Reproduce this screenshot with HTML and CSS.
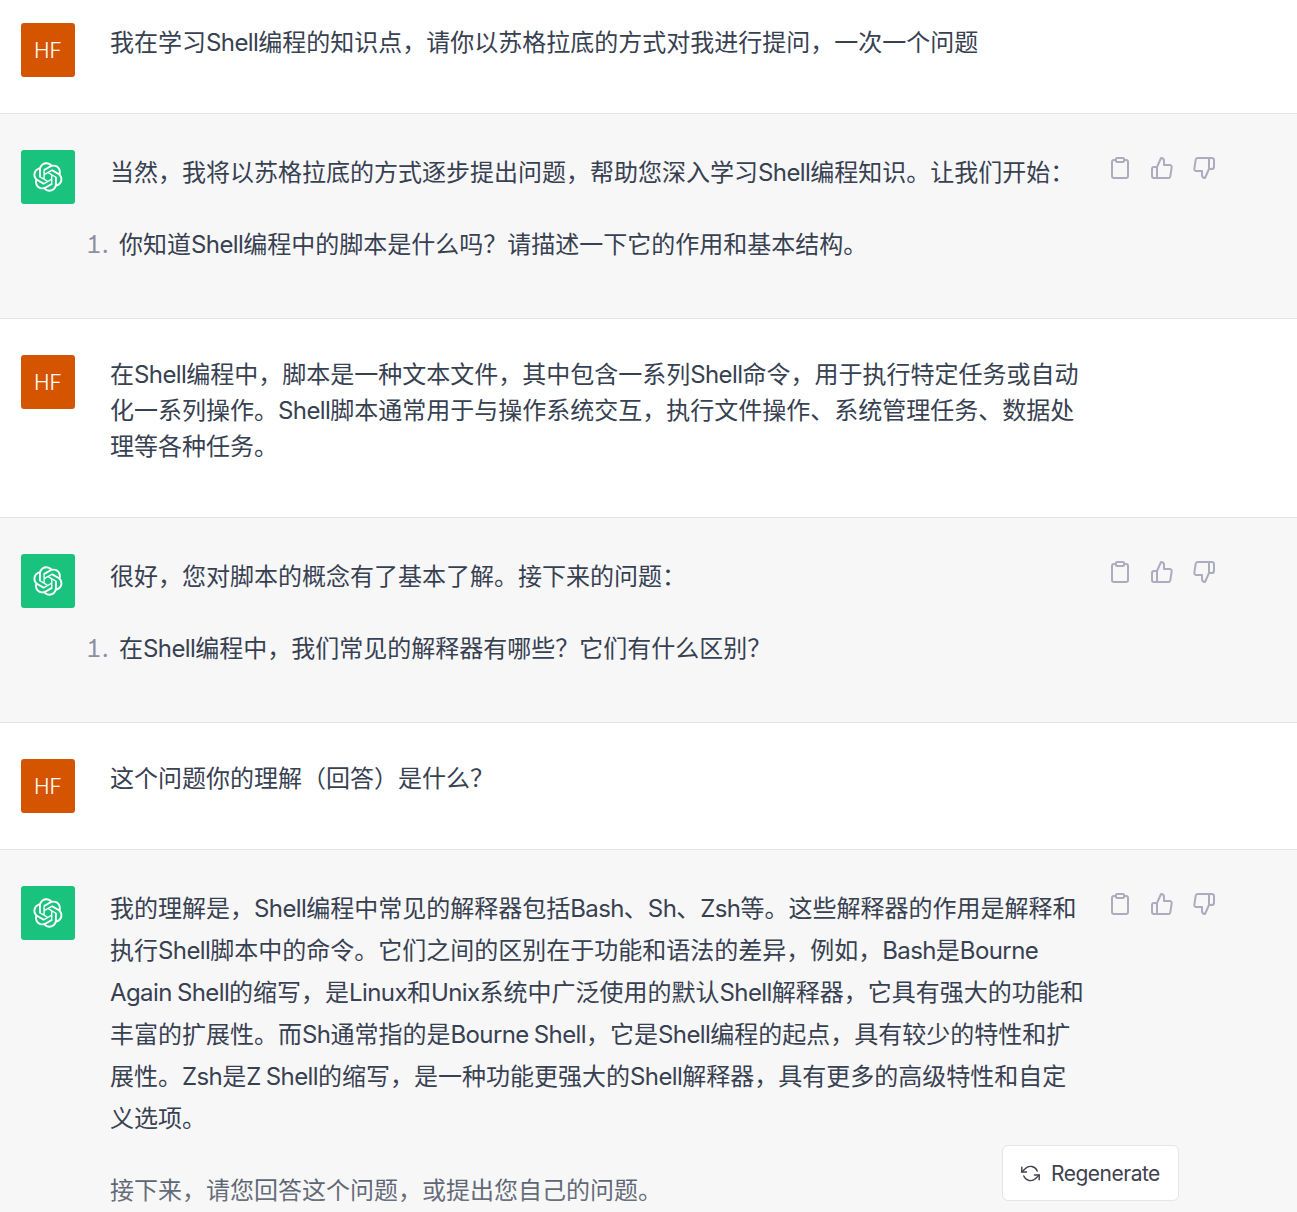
FILE: index.html
```html
<!DOCTYPE html>
<html lang="zh-CN">
<head>
<meta charset="utf-8">
<title>Shell 编程</title>
<link rel="stylesheet" href="styles.css">
</head>
<body>
<svg class="defs" width="0" height="0" aria-hidden="true">
  <defs>
    <symbol id="logo" viewBox="0 0 41 41">
      <path fill="currentColor" d="M37.5324 16.8707C37.9808 15.5241 38.1363 14.0974 37.9886 12.6859C37.8409 11.2744 37.3934 9.91076 36.676 8.68622C35.6126 6.83404 33.9882 5.3676 32.0373 4.4985C30.0864 3.62941 27.9098 3.40259 25.8215 3.85078C24.8796 2.7893 23.7219 1.94125 22.4257 1.36341C21.1295 0.785575 19.7249 0.491269 18.3058 0.500197C16.1708 0.495044 14.0893 1.16803 12.3614 2.42214C10.6335 3.67624 9.34853 5.44666 8.6917 7.47815C7.30085 7.76286 5.98686 8.3414 4.8377 9.17505C3.68854 10.0087 2.73073 11.0782 2.02839 12.312C0.956464 14.1591 0.498905 16.2988 0.721698 18.4228C0.944492 20.5467 1.83612 22.5449 3.268 24.1293C2.81966 25.4759 2.66413 26.9026 2.81182 28.3141C2.95951 29.7256 3.40701 31.0892 4.12437 32.3138C5.18791 34.1659 6.8123 35.6322 8.76321 36.5013C10.7141 37.3704 12.8907 37.5973 14.9789 37.1492C15.9208 38.2107 17.0786 39.0587 18.3747 39.6366C19.6709 40.2144 21.0755 40.5087 22.4946 40.4998C24.6307 40.5054 26.7133 39.8321 28.4418 38.5772C30.1704 37.3223 31.4556 35.5506 32.1119 33.5179C33.5027 33.2332 34.8167 32.6547 35.9659 31.821C37.115 30.9874 38.0728 29.9178 38.7752 28.684C39.8458 26.8371 40.3023 24.6979 40.0789 22.5748C39.8556 20.4517 38.9639 18.4544 37.5324 16.8707ZM22.4978 37.8849C20.7443 37.8874 19.0459 37.2733 17.6994 36.1501C17.7601 36.117 17.8666 36.0586 17.936 36.0161L25.9004 31.4156C26.1003 31.3019 26.2663 31.137 26.3813 30.9378C26.4964 30.7386 26.5563 30.5124 26.5549 30.2825V19.0542L29.9213 20.998C29.9389 21.0068 29.9541 21.0198 29.9656 21.0359C29.977 21.052 29.9842 21.0707 29.9867 21.0902V30.3889C29.9842 32.375 29.1946 34.2791 27.7909 35.6841C26.3872 37.0892 24.4838 37.8806 22.4978 37.8849ZM6.39227 31.0064C5.51397 29.4888 5.19742 27.7107 5.49804 25.9832C5.55718 26.0187 5.66048 26.0818 5.73461 26.1244L13.699 30.7248C13.8975 30.8408 14.1233 30.902 14.3532 30.902C14.583 30.902 14.8088 30.8408 15.0073 30.7248L24.731 25.1103V28.9979C24.7321 29.0177 24.7283 29.0376 24.7199 29.0556C24.7115 29.0736 24.6988 29.0893 24.6829 29.1012L16.6317 33.7497C14.9096 34.7416 12.8643 35.0097 10.9447 34.4954C9.02506 33.9811 7.38785 32.7263 6.39227 31.0064ZM4.29707 13.6194C5.17156 12.0998 6.55279 10.9364 8.19885 10.3327C8.19885 10.4013 8.19491 10.5228 8.19491 10.6071V19.808C8.19351 20.0378 8.25334 20.2638 8.36823 20.4629C8.48312 20.6619 8.64893 20.8267 8.84863 20.9404L18.5723 26.5542L15.206 28.4979C15.1894 28.5089 15.1703 28.5155 15.1505 28.5173C15.1307 28.5191 15.1107 28.516 15.0924 28.5082L7.04046 23.8557C5.32135 22.8601 4.06716 21.2235 3.55289 19.3046C3.03862 17.3858 3.30624 15.3413 4.29707 13.6194ZM31.955 20.0556L22.2312 14.4411L25.5976 12.4981C25.6142 12.4872 25.6333 12.4805 25.6531 12.4787C25.6729 12.4769 25.6928 12.4801 25.7111 12.4879L33.7631 17.1364C34.9967 17.849 36.0017 18.8982 36.6606 20.1613C37.3194 21.4244 37.6047 22.849 37.4832 24.2684C37.3617 25.6878 36.8382 27.0432 35.9743 28.1759C35.1103 29.3086 33.9415 30.1717 32.6047 30.6641C32.6047 30.5947 32.6047 30.4733 32.6047 30.3889V21.188C32.6066 20.9586 32.5474 20.7328 32.4332 20.5338C32.319 20.3348 32.154 20.1698 31.955 20.0556ZM35.3055 15.0128C35.2464 14.9765 35.1431 14.9142 35.069 14.8717L27.1045 10.2712C26.906 10.1554 26.6803 10.0943 26.4504 10.0943C26.2206 10.0943 25.9948 10.1554 25.7963 10.2712L16.0726 15.8858V11.9982C16.0715 11.9783 16.0753 11.9585 16.0837 11.9405C16.0921 11.9225 16.1048 11.9068 16.1207 11.8949L24.1719 7.25025C25.4053 6.53903 26.8158 6.19376 28.2383 6.25482C29.6608 6.31589 31.0364 6.78077 32.2044 7.59508C33.3723 8.40939 34.2842 9.53945 34.8334 10.8531C35.3826 12.1667 35.5464 13.6095 35.3055 15.0128ZM14.2424 21.9419L10.8752 19.9981C10.8576 19.9893 10.8423 19.9763 10.8309 19.9602C10.8195 19.9441 10.8122 19.9254 10.8098 19.9058V10.6071C10.8107 9.18295 11.2173 7.78848 11.9819 6.58696C12.7466 5.38544 13.8377 4.42659 15.1275 3.82264C16.4173 3.21869 17.8524 2.99464 19.2649 3.1767C20.6775 3.35876 22.0089 3.93941 23.1034 4.85067C23.0427 4.88379 22.937 4.94215 22.8668 4.98473L14.9024 9.58517C14.7025 9.69878 14.5366 9.86356 14.4215 10.0626C14.3065 10.2616 14.2466 10.4877 14.2479 10.7175L14.2424 21.9419ZM16.071 17.9991L20.4018 15.4978L24.7325 17.9975V22.9985L20.4018 25.4983L16.071 22.9985V17.9991Z"/>
    </symbol>
    <symbol id="copy" viewBox="0 0 24 24"><path d="M16 4h2a2 2 0 0 1 2 2v14a2 2 0 0 1-2 2H6a2 2 0 0 1-2-2V6a2 2 0 0 1 2-2h2"/><rect x="8" y="2" width="8" height="4" rx="1" ry="1"/></symbol>
    <symbol id="up" viewBox="0 0 24 24"><path d="M14 9V5a3 3 0 0 0-3-3l-4 9v11h11.28a2 2 0 0 0 2-1.7l1.38-9a2 2 0 0 0-2-2.3zM7 22H4a2 2 0 0 1-2-2v-7a2 2 0 0 1 2-2h3"/></symbol>
    <symbol id="down" viewBox="0 0 24 24"><path d="M10 15v4a3 3 0 0 0 3 3l4-9V2H5.72a2 2 0 0 0-2 1.7l-1.38 9a2 2 0 0 0 2 2.3zm7-13h2.67A2.31 2.31 0 0 1 22 4v7a2.31 2.31 0 0 1-2.33 2H17"/></symbol>
  </defs>
</svg>

<main class="thread">
  <section class="row row-first">
    <div class="avatar avatar-user">HF</div>
    <div class="body"><p class="user-text">我在学习<span class="en">Shell</span>编程的知识点，请你以苏格拉底的方式对我进行提问，一次一个问题</p></div>
  </section>

  <section class="row row-bot">
    <div class="avatar avatar-bot"><svg class="logo"><use href="#logo"/></svg></div>
    <div class="body">
      <p class="bot-text">当然，我将以苏格拉底的方式逐步提出问题，帮助您深入学习<span class="en">Shell</span>编程知识。让我们开始：</p>
      <ol class="list"><li>你知道<span class="en">Shell</span>编程中的脚本是什么吗？请描述一下它的作用和基本结构。</li></ol>
    </div>
    <div class="actions">
      <svg class="icon"><use href="#copy"/></svg>
      <svg class="icon"><use href="#up"/></svg>
      <svg class="icon"><use href="#down"/></svg>
    </div>
  </section>

  <section class="row">
    <div class="avatar avatar-user">HF</div>
    <div class="body"><p class="user-text">在<span class="en">Shell</span>编程中，脚本是一种文本文件，其中包含一系列<span class="en">Shell</span>命令，用于执行特定任务或自动化一系列操作。<span class="en">Shell</span>脚本通常用于与操作系统交互，执行文件操作、系统管理任务、数据处理等各种任务。</p></div>
  </section>

  <section class="row row-bot">
    <div class="avatar avatar-bot"><svg class="logo"><use href="#logo"/></svg></div>
    <div class="body">
      <p class="bot-text">很好，您对脚本的概念有了基本了解。接下来的问题：</p>
      <ol class="list"><li>在<span class="en">Shell</span>编程中，我们常见的解释器有哪些？它们有什么区别？</li></ol>
    </div>
    <div class="actions">
      <svg class="icon"><use href="#copy"/></svg>
      <svg class="icon"><use href="#up"/></svg>
      <svg class="icon"><use href="#down"/></svg>
    </div>
  </section>

  <section class="row">
    <div class="avatar avatar-user">HF</div>
    <div class="body"><p class="user-text">这个问题你的理解（回答）是什么？</p></div>
  </section>

  <section class="row row-bot">
    <div class="avatar avatar-bot"><svg class="logo"><use href="#logo"/></svg></div>
    <div class="body">
      <p class="bot-text">我的理解是，<span class="en">Shell</span>编程中常见的解释器包括<span class="en">Bash</span>、<span class="en">Sh</span>、<span class="en">Zsh</span>等。这些解释器的作用是解释和执行<span class="en">Shell</span>脚本中的命令。它们之间的区别在于功能和语法的差异，例如，<span class="en">Bash</span>是<span class="en">Bourne Again Shell</span>的缩写，是<span class="en">Linux</span>和<span class="en">Unix</span>系统中广泛使用的默认<span class="en">Shell</span>解释器，它具有强大的功能和丰富的扩展性。而<span class="en">Sh</span>通常指的是<span class="en">Bourne Shell</span>，它是<span class="en">Shell</span>编程的起点，具有较少的特性和扩展性。<span class="en">Zsh</span>是<span class="en">Z Shell</span>的缩写，是一种功能更强大的<span class="en">Shell</span>解释器，具有更多的高级特性和自定义选项。</p>
      <p class="bot-text bot-next">接下来，请您回答这个问题，或提出您自己的问题。</p>
    </div>
    <div class="actions">
      <svg class="icon"><use href="#copy"/></svg>
      <svg class="icon"><use href="#up"/></svg>
      <svg class="icon"><use href="#down"/></svg>
    </div>
  </section>
</main>

<div class="fade"></div>
<button class="regen" type="button">
  <svg class="regen-icon" viewBox="0 0 24 24"><polyline points="1 4 1 10 7 10"/><polyline points="23 20 23 14 17 14"/><path d="M20.49 9A9 9 0 0 0 5.64 5.64L1 10m22 4l-4.64 4.36A9 9 0 0 1 3.51 15"/></svg>
  <span>Regenerate</span>
</button>
</body>
</html>
```
FILE: styles.css
```css
* { box-sizing: border-box; }
html, body { margin: 0; padding: 0; height: 1212px; overflow: hidden; background: #fff; }
body { position: relative; font-family: Inter, "Noto Sans CJK SC", "Noto Sans", sans-serif; font-size: 24px; color: #374151; }
.defs { position: absolute; }
.thread { display: flex; flex-direction: column; }
.row { display: flex; align-items: flex-start; padding: 36px 0 36px 21px; border-bottom: 1px solid #e3e3e5; }
.row-first { padding-top: 23px; }
.row-bot { background: #f7f7f8; }
.avatar { flex: none; width: 54px; height: 54px; border-radius: 3px; display: flex; align-items: center; justify-content: center; color: #fff; font-size: 21px; font-weight: 300; }
.avatar-user { background: #d55400; }
.avatar-bot { background: #19c37d; }
.logo { width: 30px; height: 30px; }
.body { flex: none; width: 976px; margin-left: 35px; padding: 2px 0 16px; }
.en { letter-spacing: -0.6px; word-spacing: -1px; }
.user-text { margin: 0; line-height: 36px; }
.bot-text { margin: 0; line-height: 42px; }
.bot-next { margin-top: 30px; }
.list { margin: 30px 0 0 -24px; padding: 0; line-height: 42px; list-style: none; counter-reset: item; }
.list li { counter-increment: item; display: flex; }
.list li::before { content: counter(item) "."; flex: none; width: 33px; color: #8e8ea0; letter-spacing: 0.5px; font-variant-numeric: tabular-nums; font-feature-settings: "tnum", "cv01"; }
.actions { flex: none; display: flex; gap: 18px; margin-left: 22px; padding-top: 6px; }
.icon { width: 24px; height: 24px; fill: none; stroke: #acacbe; stroke-width: 2; stroke-linecap: round; stroke-linejoin: round; }
.fade { position: absolute; left: 0; right: 0; bottom: 0; height: 90px; background: linear-gradient(180deg, rgba(247,247,248,0), rgba(247,247,248,.3)); }
.regen { position: absolute; left: 1002px; top: 1145px; width: 177px; height: 56px; display: flex; align-items: center; gap: 11px; padding: 0 0 0 18px; background: #fff; border: 1px solid #e5e5e5; border-radius: 6px; font: 21px Inter, sans-serif; letter-spacing: -0.5px; color: #40414f; }
.regen-icon { width: 19px; height: 19px; fill: none; stroke: currentColor; stroke-width: 1.8; stroke-linecap: round; stroke-linejoin: round; }
```
